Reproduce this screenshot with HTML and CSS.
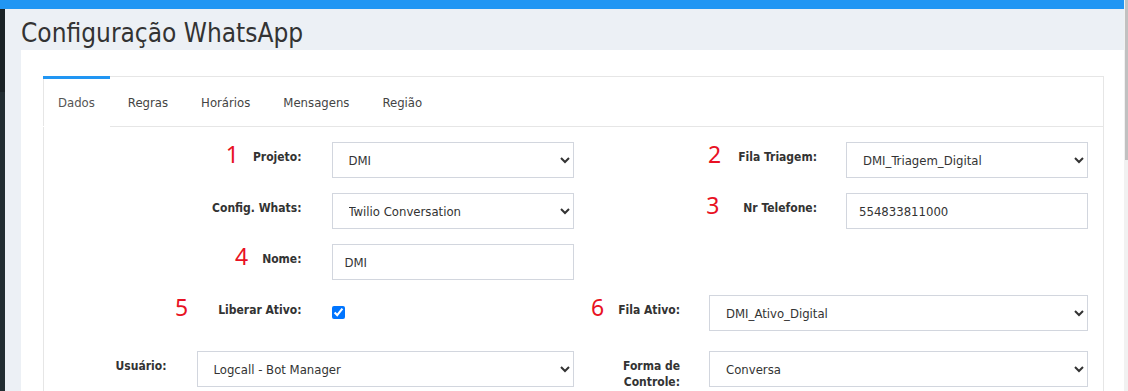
FILE: index.html
```html
<!DOCTYPE html>
<html lang="pt-BR">

<head>
    <meta charset="UTF-8">
    <meta name="viewport" content="width=device-width, initial-scale=1.0">
    <title>Configuração WhatsApp</title>

    <link rel="stylesheet" href="styles.css">
</head>

<body>
    <div class="app">
        <div class="main">
            <div class="topbar"></div>
            <div class="shell">
                <div class="sidebar">
                    <div class="sidebar-top"></div>
                </div>
                <div class="page">
                    <h1 class="page-title">Configuração WhatsApp</h1>
                    <div class="panel">
                        <div class="tabs-box">
                            <ul class="tabs">
                                <li class="tab active">Dados</li>
                                <li class="tab">Regras</li>
                                <li class="tab">Horários</li>
                                <li class="tab">Mensagens</li>
                                <li class="tab">Região</li>
                            </ul>
                            <form class="tab-pane">
                                <div class="form-row">
                                    <div class="group">
                                        <label class="field-label"><span class="note">1</span>Projeto:</label>
                                        <select class="control control-sm">
                                            <option>DMI</option>
                                        </select>
                                    </div>
                                    <div class="group group-right">
                                        <label class="field-label"><span class="note note-mid">2</span>Fila Triagem:</label>
                                        <select class="control control-sm">
                                            <option>DMI_Triagem_Digital</option>
                                        </select>
                                    </div>
                                </div>
                                <div class="form-row">
                                    <div class="group">
                                        <label class="field-label">Config. Whats:</label>
                                        <select class="control control-sm">
                                            <option>Twilio Conversation</option>
                                        </select>
                                    </div>
                                    <div class="group group-right">
                                        <label class="field-label"><span class="note note-far">3</span>Nr Telefone:</label>
                                        <input class="control control-sm" type="text" value="554833811000">
                                    </div>
                                </div>
                                <div class="form-row">
                                    <div class="group">
                                        <label class="field-label"><span class="note">4</span>Nome:</label>
                                        <input class="control control-sm" type="text" value="DMI">
                                    </div>
                                    <div class="group group-right"></div>
                                </div>
                                <div class="form-row">
                                    <div class="group">
                                        <label class="field-label"><span class="note note-farthest">5</span>Liberar Ativo:</label>
                                        <div class="control-sm">
                                            <input class="check" type="checkbox" checked>
                                        </div>
                                    </div>
                                    <div class="group group-right">
                                        <label class="field-label"><span class="note">6</span>Fila Ativo:</label>
                                        <select class="control control-lg">
                                            <option>DMI_Ativo_Digital</option>
                                        </select>
                                    </div>
                                </div>
                                <div class="form-row form-row-last">
                                    <div class="group">
                                        <label class="field-label">Usuário:</label>
                                        <select class="control control-lg">
                                            <option>Logcall - Bot Manager</option>
                                        </select>
                                    </div>
                                    <div class="group group-right">
                                        <label class="field-label">Forma de<br>Controle:</label>
                                        <select class="control control-lg">
                                            <option>Conversa</option>
                                        </select>
                                    </div>
                                </div>
                            </form>
                        </div>
                    </div>
                </div>
            </div>
        </div>
        <div class="scrollbar">
            <div class="scroll-thumb"></div>
        </div>
    </div>
</body>

</html>
```

FILE: styles.css
```css
* {
    box-sizing: border-box;
}

body {
    margin: 0;
    font-family: "DejaVu Sans Condensed", "DejaVu Sans", sans-serif;
    font-size: 13px;
    color: #333;
}

.app {
    display: flex;
    height: 100vh;
    overflow: hidden;
}

.main {
    flex: 1;
    display: flex;
    flex-direction: column;
    min-height: 0;
}

.topbar {
    flex-shrink: 0;
    height: 9px;
    background-color: #2196f3;
}

.shell {
    flex: 1;
    display: flex;
    min-height: 0;
}

.sidebar {
    width: 5px;
    background-color: #222d32;
}

.sidebar-top {
    height: 83px;
    background-color: #1a2226;
}

.page {
    flex: 1;
    display: flex;
    flex-direction: column;
    background-color: #ecf0f5;
    padding-left: 16px;
}

.page-title {
    flex-shrink: 0;
    margin: 9px 0 1px 0;
    font-size: 26px;
    line-height: 31px;
    font-weight: normal;
    color: #333;
}

.panel {
    flex: 1 0 auto;
    background-color: white;
    padding: 26px 20px 0 22px;
}

.tabs-box {
    height: 100%;
    border: 1px solid #e6e6e6;
    border-bottom: 0;
}

/* tabs */
.tabs {
    display: flex;
    margin: 0;
    padding: 0;
    list-style: none;
    border-bottom: 1px solid #e6e6e6;
}

.tab {
    margin: -1px 3px -1px 0;
    padding: 15px 15px 14px;
    line-height: 18px;
    color: #444;
    border-top: 3px solid transparent;
    border-bottom: 1px solid transparent;
}

.tab.active {
    margin-left: -1px;
    color: #555;
    border-top-color: #2196f3;
    border-bottom-color: white;
}

/* form */
.tab-pane {
    padding-top: 15px;
}

.form-row {
    display: flex;
    margin-bottom: 15px;
}

.form-row-last {
    margin-top: 20px;
}

.group {
    flex: 0 0 50%;
    display: flex;
    align-items: flex-start;
}

.group-right {
    padding-right: 15px;
}

.field-label {
    flex: 1;
    padding: 7px 30px 0 0;
    text-align: right;
    font-size: 12px;
    font-weight: bold;
    line-height: 16px;
    color: #333;
}

.group-right .field-label {
    padding-right: 29px;
}

.note {
    margin-right: 14px;
    font-family: "Noto Sans", sans-serif;
    font-size: 23px;
    font-weight: normal;
    line-height: 0;
    vertical-align: -2px;
    color: #e81123;
}

.note-mid {
    margin-right: 17px;
}

.note-far {
    margin-right: 24px;
}

.note-farthest {
    margin-right: 30px;
}

.control {
    height: 36px;
    padding: 6px 12px;
    border: 1px solid #d2d6de;
    border-radius: 0;
    background-color: white;
    font-family: inherit;
    font-size: 13px;
    color: #333;
}

.control-sm {
    width: 242px;
}

.control-lg {
    width: 377px;
}

.group-right .control-lg {
    width: 379px;
}

.check {
    width: 13px;
    height: 13px;
    margin: 11px 0 0 0;
}

.scrollbar {
    width: 4px;
    background-color: #f1f1f1;
}

.scroll-thumb {
    height: 160px;
    margin-left: 1px;
    background-color: #c1c1c1;
}
```
